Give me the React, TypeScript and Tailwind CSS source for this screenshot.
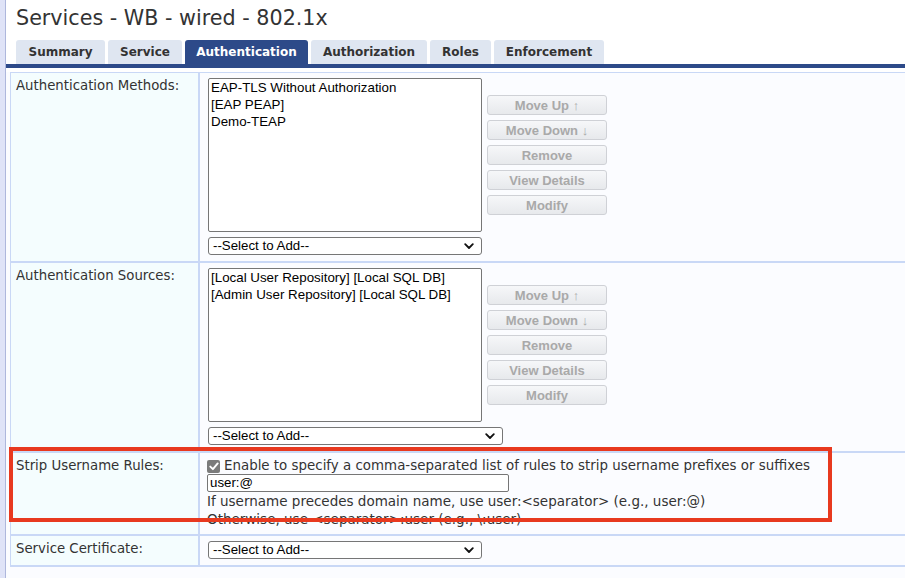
import React from "react";

const V = { fontFamily: '"DejaVu Sans", Verdana, sans-serif' };
const A = { fontFamily: '"Liberation Sans", Arial, sans-serif' };

function Chevron() {
  return (
    <svg width="10" height="7" viewBox="0 0 10 7" className="shrink-0">
      <path d="M1.2 1.2 L5 5 L8.8 1.2" fill="none" stroke="#111" strokeWidth="1.8" strokeLinecap="round" strokeLinejoin="round" />
    </svg>
  );
}

function SelectBox({ w }: { w: string }) {
  return (
    <div
      className={`${w} h-[18px] border border-[#767676] rounded-[3px] bg-white flex items-center justify-between pl-[4px] pr-[7px] text-[13.3px] text-black leading-none`}
      style={A}
    >
      <span>--Select to Add--</span>
      <Chevron />
    </div>
  );
}

function Btn({ label }: { label: string }) {
  return (
    <div
      className="w-[120px] h-[20px] rounded-[3px] border border-[#cfd1d6] bg-gradient-to-b from-[#f6f7f9] to-[#e7e9ec] flex items-center justify-center text-[13px] font-bold text-[#a9a9a9] leading-none"
      style={A}
    >
      {label}
    </div>
  );
}

function ListBlock({ items, selectW }: { items: string[]; selectW: string }) {
  return (
    <div className="flex flex-col">
      <div className="flex items-center gap-[5px]">
        <div
          className="w-[274px] h-[154px] border border-[#767676] rounded-[2px] bg-white pl-[2px] text-[13.35px] text-black leading-[17px]"
          style={A}
        >
          {items.map((t) => (
            <div key={t}>{t}</div>
          ))}
        </div>
        <div className="flex flex-col gap-[5px]">
          <Btn label="Move Up ↑" />
          <Btn label="Move Down ↓" />
          <Btn label="Remove" />
          <Btn label="View Details" />
          <Btn label="Modify" />
        </div>
      </div>
      <div className="mt-[5px]">
        <SelectBox w={selectW} />
      </div>
    </div>
  );
}

function Row({ label, children }: { label: string; children: React.ReactNode }) {
  return (
    <div className="flex border-b-2 border-[#c9d8f6]">
      <div
        className="w-[189px] shrink-0 bg-[#f4fdfe] border-r-2 border-[#c9d8f6] pl-[5px] pt-[5px] text-[13.3px] text-[#333] leading-[16px]"
        style={V}
      >
        {label}
      </div>
      <div className="flex-1 pl-[8px] pt-[5px] pb-[6px] bg-[#fbfcff]">{children}</div>
    </div>
  );
}

const tabs: [string, string][] = [
  ["Summary", "w-[89px]"],
  ["Service", "w-[74px]"],
  ["Authentication", "w-[123px]"],
  ["Authorization", "w-[116px]"],
  ["Roles", "w-[61px]"],
  ["Enforcement", "w-[110px]"],
];

export default function App() {
  return (
    <div className="relative w-[905px] h-[578px] overflow-hidden bg-white flex">
      <div className="w-[6px] shrink-0 bg-[#dfe3f7] border-r border-[#aeb7dc]" />
      <div className="flex-1 flex flex-col min-w-0">
        <div className="h-[40px] pl-[10px] pt-[6px] text-[20.7px] text-[#333] leading-[24px]" style={V}>
          Services - WB - wired - 802.1x
        </div>
        <div className="flex gap-[3px] pl-[10px] h-[24px]">
          {tabs.map(([t, w]) => (
            <div
              key={t}
              className={`${w} rounded-t-[3px] flex items-center justify-center text-[12px] font-bold leading-none ${
                t === "Authentication" ? "bg-[#2d4a89] text-white" : "bg-[#dfe6f1] text-[#333]"
              }`}
              style={V}
            >
              {t}
            </div>
          ))}
        </div>
        <div className="h-[4px] bg-[#2d4a89]" />
        <div className="h-[4px] bg-white" />
        <div className="flex-1 bg-[#fbfcff] pl-[4px]">
          <div className="border-l border-t border-[#c9d8f6]">
            <Row label="Authentication Methods:">
              <ListBlock items={["EAP-TLS Without Authorization", "[EAP PEAP]", "Demo-TEAP"]} selectW="w-[274px]" />
            </Row>
            <Row label="Authentication Sources:">
              <ListBlock
                items={["[Local User Repository] [Local SQL DB]", "[Admin User Repository] [Local SQL DB]"]}
                selectW="w-[295px]"
              />
            </Row>
            <Row label="Strip Username Rules:">
              <div className="text-[13.4px] text-[#333] -ml-[1px]" style={V}>
                <div className="flex items-center h-[16px] gap-[4px]">
                  <span className="w-[13px] h-[13px] rounded-[2px] bg-[#7b7b7b] flex items-center justify-center">
                    <svg width="10" height="9" viewBox="0 0 10 9">
                      <path d="M1.3 4.6 L3.9 7.2 L8.7 1.4" fill="none" stroke="#fff" strokeWidth="1.9" strokeLinecap="round" strokeLinejoin="round" />
                    </svg>
                  </span>
                  <span className="leading-none">
                    Enable to specify a comma-separated list of rules to strip username prefixes or suffixes
                  </span>
                </div>
                <div
                  className="w-[302px] h-[18px] border border-[#767676] rounded-[2px] bg-white pl-[2px] flex items-center text-[13.3px] text-black leading-none"
                  style={A}
                >
                  user:@
                </div>
                <div className="leading-[18px] text-[13.5px]">
                  If username precedes domain name, use user:&lt;separator&gt; (e.g., user:@)
                </div>
                <div className="leading-[18px] text-[13.5px]">Otherwise, use &lt;separator&gt;:user (e.g., \:user)</div>
              </div>
            </Row>
            <Row label="Service Certificate:">
              <SelectBox w="w-[274px]" />
            </Row>
          </div>
        </div>
      </div>
      <div className="absolute left-[9px] top-[447px] w-[823px] h-[75px] border-[4px] border-[#e8391f] pointer-events-none" />
    </div>
  );
}
